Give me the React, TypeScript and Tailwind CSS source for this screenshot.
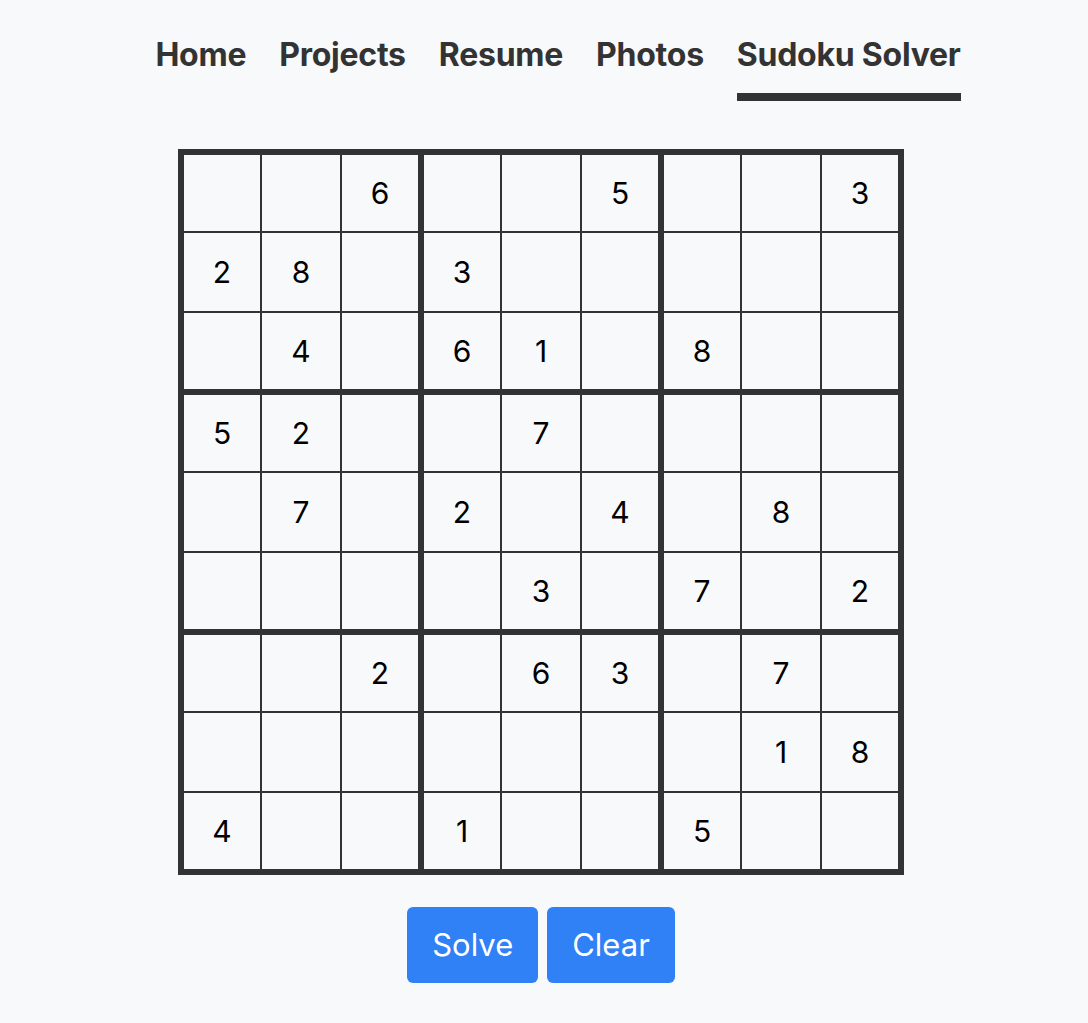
import React, { useState } from 'react';

const puzzle: string[] = [
  '..6..5..3',
  '28.3.....',
  '.4.61.8..',
  '52..7....',
  '.7.2.4.8.',
  '....3.7.2',
  '..2.63.7.',
  '.......18',
  '4..1..5..',
];

const navItems = ['Home', 'Projects', 'Resume', 'Photos', 'Sudoku Solver'];

export default function App() {
  const [board, setBoard] = useState<string[][]>(
    puzzle.map((row) => row.split('').map((c) => (c === '.' ? '' : c)))
  );

  const clear = () => setBoard(Array.from({ length: 9 }, () => Array(9).fill('')));

  return (
    <div
      className="min-h-[1023px] bg-[#f8f9fa] text-[#333]"
      style={{ fontFamily: 'Inter, "Liberation Sans", sans-serif' }}
    >
      {/* nav */}
      <nav className="flex justify-center pl-[28px] pt-[35px] gap-[33px]">
        {navItems.map((item) => {
          const active = item === 'Sudoku Solver';
          return (
            <a
              key={item}
              href="#"
              className={`text-[32px] leading-[40px] font-bold tracking-[-0.25px] pb-[18px] border-b-[8px] ${
                active ? 'border-[#333]' : 'border-transparent'
              }`}
            >
              {item}
            </a>
          );
        })}
      </nav>

      {/* board */}
      <div className="flex flex-col items-center pr-[6px] mt-[48px]">
        <div className="border-[3px] border-[#333] grid grid-cols-[repeat(9,80px)]">
          {board.map((row, r) =>
            row.map((val, c) => {
              const left = c % 3 === 0 ? 'border-l-[3px]' : 'border-l';
              const right = c % 3 === 2 ? 'border-r-[3px]' : 'border-r';
              const top = r % 3 === 0 ? 'border-t-[3px]' : 'border-t';
              const bottom = r % 3 === 2 ? 'border-b-[3px]' : 'border-b';
              return (
                <div
                  key={`${r}-${c}`}
                  className={`w-[80px] h-[80px] border-[#333] ${left} ${right} ${top} ${bottom} flex items-center justify-center text-[30px] text-black`}
                >
                  {val}
                </div>
              );
            })
          )}
        </div>

        <div className="flex gap-[9px] mt-[32px]">
          <button className="bg-[#3080f6] text-white text-[31px] leading-[36px] px-[25px] py-[20px] rounded-[6px]">
            Solve
          </button>
          <button
            onClick={clear}
            className="bg-[#3080f6] text-white text-[31px] leading-[36px] px-[25px] py-[20px] rounded-[6px]"
          >
            Clear
          </button>
        </div>
      </div>
    </div>
  );
}
